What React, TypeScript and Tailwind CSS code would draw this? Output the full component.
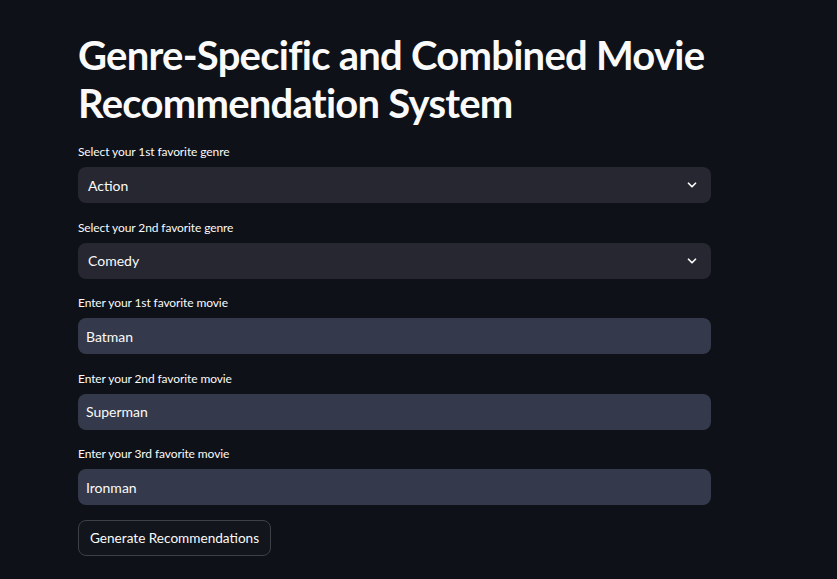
import React from "react";

const font = { fontFamily: '"Lato", "Noto Sans", sans-serif' };

function Chevron() {
  return (
    <svg width="14" height="14" viewBox="0 0 24 24" fill="none" stroke="#fafafa" strokeWidth="3" strokeLinecap="round" strokeLinejoin="round">
      <path d="M6 9l6 6 6-6" />
    </svg>
  );
}

function SelectField({ label, value }: { label: string; value: string }) {
  return (
    <div className="flex flex-col">
      <div className="text-[12px] leading-[16px] text-[#fafafa] mb-[7px] tracking-[-0.1px]">{label}</div>
      <div className="h-[36px] rounded-[8px] bg-[#262730] flex items-center justify-between pl-[10px] pr-[12px]">
        <span className="text-[14px] text-[#fafafa]">{value}</span>
        <Chevron />
      </div>
    </div>
  );
}

function TextField({ label, value }: { label: string; value: string }) {
  return (
    <div className="flex flex-col">
      <div className="text-[12px] leading-[16px] text-[#fafafa] mb-[7px] tracking-[-0.1px]">{label}</div>
      <div className="h-[36px] rounded-[8px] bg-[#343a4b] flex items-center pl-[8px]">
        <span className="text-[14px] text-[#fafafa]">{value}</span>
      </div>
    </div>
  );
}

export default function App() {
  return (
    <div className="w-[837px] h-[579px] bg-[#0e1117] overflow-hidden" style={font}>
      <div className="ml-[78px] w-[633px] pt-[31px] flex flex-col">
        <h1 className="text-[40px] leading-[48px] font-bold text-[#fafafa] mb-[17px] tracking-[-0.75px] whitespace-nowrap">
          Genre-Specific and Combined Movie
          <br />
          Recommendation System
        </h1>
        <div className="flex flex-col gap-[16.5px]">
          <SelectField label="Select your 1st favorite genre" value="Action" />
          <SelectField label="Select your 2nd favorite genre" value="Comedy" />
          <TextField label="Enter your 1st favorite movie" value="Batman" />
          <TextField label="Enter your 2nd favorite movie" value="Superman" />
          <TextField label="Enter your 3rd favorite movie" value="Ironman" />
        </div>
        <div className="mt-[15px]">
          <button className="h-[36px] px-[11px] rounded-[8px] border border-[#3d4047] bg-[#12151c] text-[13.6px] text-[#fafafa]">
            Generate Recommendations
          </button>
        </div>
      </div>
    </div>
  );
}
